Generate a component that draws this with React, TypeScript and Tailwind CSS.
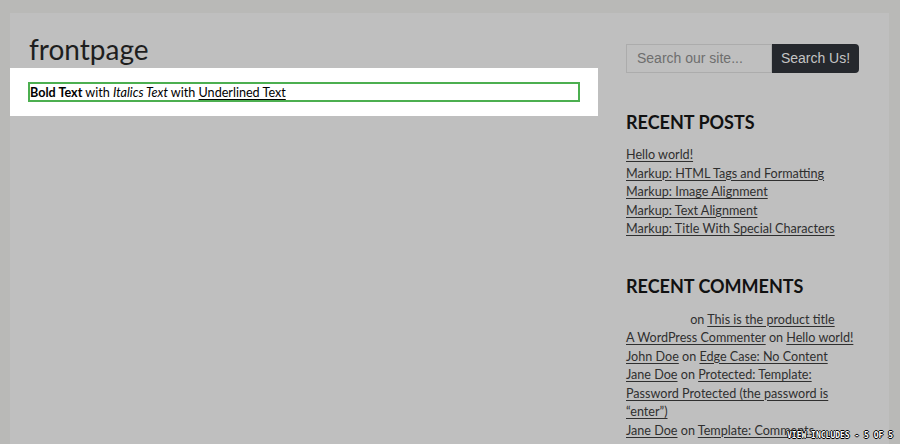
const recentPosts = [
  "Hello world!",
  "Markup: HTML Tags and Formatting",
  "Markup: Image Alignment",
  "Markup: Text Alignment",
  "Markup: Title With Special Characters",
];

function Link({ children }: { children: React.ReactNode }) {
  return <a className="text-[#2f2f2f] underline decoration-1 underline-offset-2">{children}</a>;
}

export default function App() {
  return (
    <div className="relative h-[444px] w-[900px] overflow-hidden bg-[#b9b9b7] pl-[10px] pt-[13px] font-['Lato',sans-serif]">
      <div className="flex h-[600px] w-[879px] bg-[#bfbfbf]">
        <main className="w-[588px] pt-[17px]">
          <h1 className="pl-[19px] text-[28px] leading-[38px] font-normal text-[#1e1e1e]">frontpage</h1>
          <div className="bg-white px-[18px] py-[14px]">
            <div className="border-2 border-[#4caf50] pt-[2px] text-[12.6px] leading-[14px] text-black">
              <strong className="font-bold">Bold Text</strong> with <em>Italics Text</em> with{" "}
              <span className="underline underline-offset-2">Underlined Text</span>
            </div>
          </div>
        </main>

        <aside className="ml-[28px] w-[240px] pt-[31px] text-[12.6px] leading-[18.5px] text-[#2f2f2f]">
          <form className="flex h-[29px] font-['Liberation_Sans',sans-serif] text-[14px]">
            <div className="flex w-[146px] items-center border border-[#acacac] px-[10px] text-[#6e6e6e]">
              Search our site...
            </div>
            <button
              type="button"
              className="w-[87px] rounded-r-[4px] bg-[#25282d] text-[#c4c4c4]"
            >
              Search Us!
            </button>
          </form>

          <h2 className="mt-[37px] text-[18px] leading-[24px] font-bold text-[#111]">RECENT POSTS</h2>
          <ul className="mt-[12px]">
            {recentPosts.map((post) => (
              <li key={post}>
                <Link>{post}</Link>
              </li>
            ))}
          </ul>

          <h2 className="mt-[35px] text-[18px] leading-[24px] font-bold text-[#111]">RECENT COMMENTS</h2>
          <ul className="mt-[13px] w-[236px]">
            <li>
              <span className="inline-block w-[61px]" /> on <Link>This is the product title</Link>
            </li>
            <li>
              <Link>A WordPress Commenter</Link> on <Link>Hello world!</Link>
            </li>
            <li>
              <Link>John Doe</Link> on <Link>Edge Case: No Content</Link>
            </li>
            <li>
              <Link>Jane Doe</Link> on <Link>Protected: Template: Password Protected (the password is “enter”)</Link>
            </li>
            <li>
              <Link>Jane Doe</Link> on <Link>Template: Comments</Link>
            </li>
          </ul>
        </aside>
      </div>

      <div className="absolute right-[7px] bottom-[3px] font-['DejaVu_Sans_Mono',monospace] text-[8px] leading-[10px] font-bold text-white [text-shadow:1px_0_0_#000,-1px_0_0_#000,0_1px_0_#000,0_-1px_0_#000]">
        VIEW INCLUDES - 5 OF 5
      </div>
    </div>
  );
}
